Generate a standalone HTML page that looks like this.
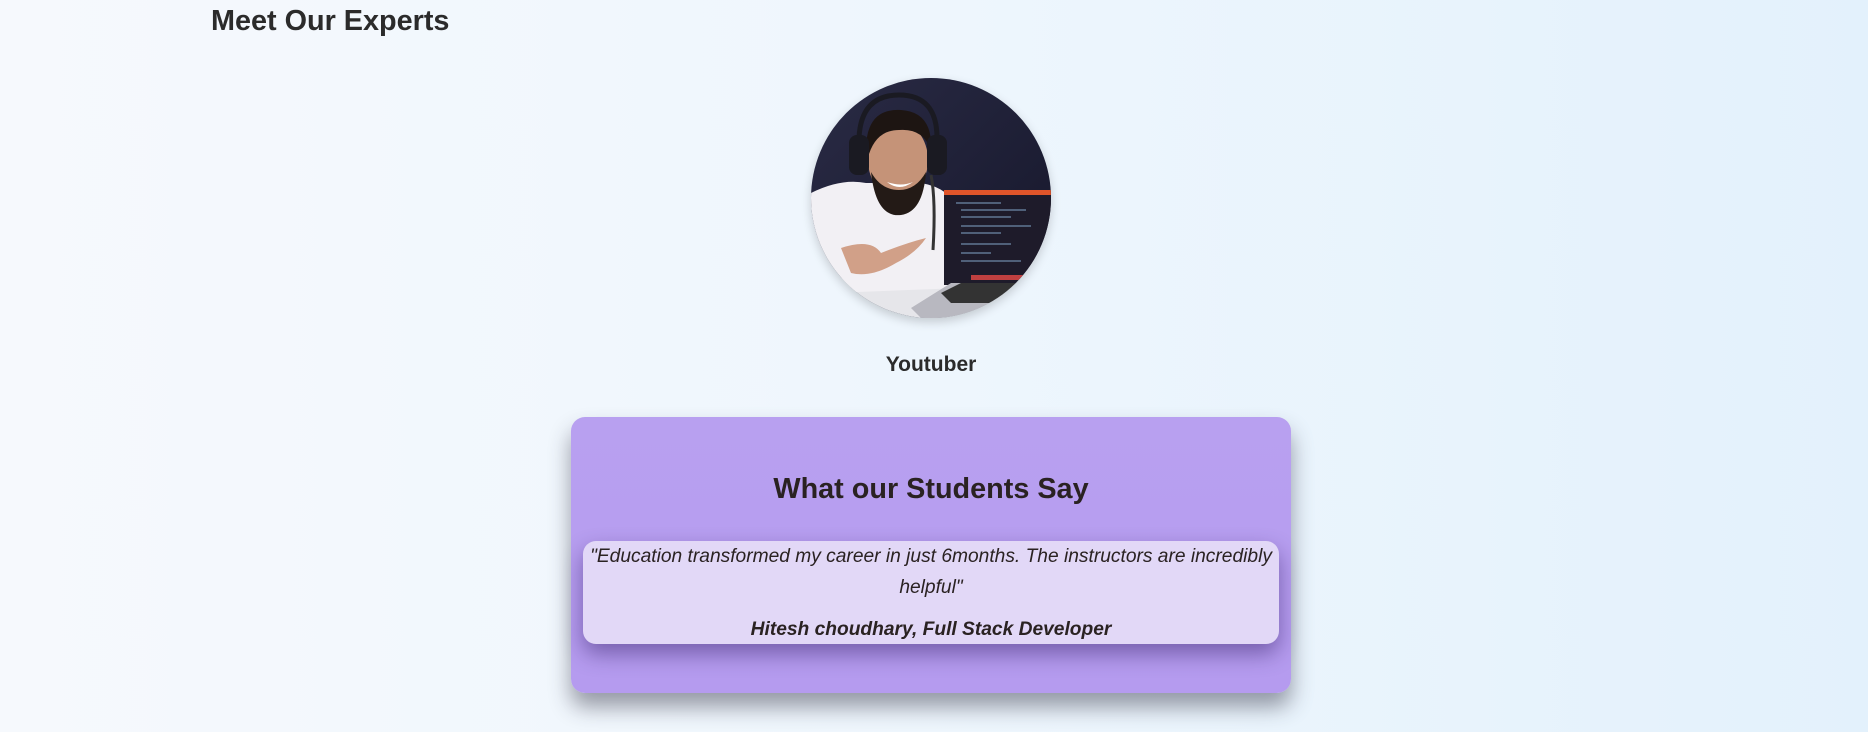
<!DOCTYPE html>
<html><head><meta charset="utf-8"><style>
html,body{margin:0;padding:0;width:1868px;height:732px;overflow:hidden}
body{background:linear-gradient(90deg,#f6f9fd 0%,#eef6fd 50%,#e3f1fc 100%);font-family:"Liberation Sans",Arial,sans-serif;color:#2b2b2b;position:relative}
.h1{position:absolute;left:211px;top:3px;font-size:28.8px;font-weight:bold;margin:0;line-height:36px}
.av{position:absolute;left:811px;top:78px;width:240px;height:240px;border-radius:50%;overflow:hidden;box-shadow:0 4px 10px rgba(0,0,0,.18)}
.yt{position:absolute;left:0;width:1862px;text-align:center;top:352px;font-size:21px;font-weight:bold;line-height:26px}
.card{position:absolute;left:571px;top:417px;width:720px;height:276px;border-radius:14px;background:linear-gradient(#b8a0f0,#b59bef);box-shadow:0 14px 22px rgba(40,40,60,.45)}
.ch{position:absolute;left:571px;width:720px;top:472px;margin:0;text-align:center;font-size:28.8px;font-weight:bold;line-height:34px;color:#2a2222}
.inner{position:absolute;left:583px;top:541px;width:696px;height:103px;border-radius:13px;background:#e2d8f7;box-shadow:0 10px 22px rgba(40,20,90,.45);text-align:center;font-size:19.2px;font-style:italic;color:#2a2222}
.q{position:absolute;left:0;right:0;top:0;line-height:31px}
.a{position:absolute;left:0;right:0;top:77px;font-weight:bold;line-height:24px}
</style></head><body>
<div class="h1">Meet Our Experts</div>
<div class="av">
<svg width="240" height="240" viewBox="0 0 240 240">
<defs><linearGradient id="bg" x1="0" y1="0" x2="1" y2="1"><stop offset="0" stop-color="#2a2b45"/><stop offset="1" stop-color="#15162a"/></linearGradient></defs>
<rect width="240" height="240" fill="url(#bg)"/>
<rect x="0" y="200" width="240" height="40" fill="#e6e6ea"/>
<path d="M0 115 Q30 100 55 105 L110 105 Q140 110 150 135 L150 210 L20 215 L0 215Z" fill="#f2f0f4"/>
<g transform="translate(0,12)">
<ellipse cx="87" cy="70" rx="30" ry="38" fill="#c59378"/>
<path d="M55 60 Q55 18 90 20 Q122 22 120 60 Q112 38 88 40 Q66 40 58 64Z" fill="#1d1512"/>
<path d="M60 82 Q65 128 90 125 Q112 122 115 82 Q105 100 88 100 Q70 100 60 82Z" fill="#231a16"/>
<path d="M76 92 Q88 102 102 92 Q90 97 76 92Z" fill="#fff"/>
<rect x="38" y="45" width="20" height="40" rx="8" fill="#1a1a22"/>
<rect x="116" y="45" width="20" height="40" rx="8" fill="#1a1a22"/>
<path d="M48 48 Q50 5 88 5 Q126 5 126 48" stroke="#1a1a22" stroke-width="5" fill="none"/>
<path d="M120 85 Q125 110 122 160" stroke="#333" stroke-width="3" fill="none"/>
</g>
<rect x="133" y="112" width="115" height="95" fill="#1e1b2a"/>
<rect x="133" y="112" width="115" height="5" fill="#e0552a"/>
<g stroke="#8fb8e0" stroke-width="1.2" opacity=".7"><line x1="145" y1="125" x2="190" y2="125"/><line x1="150" y1="132" x2="215" y2="132"/><line x1="150" y1="139" x2="200" y2="139"/><line x1="150" y1="148" x2="220" y2="148"/><line x1="150" y1="155" x2="190" y2="155"/><line x1="150" y1="166" x2="200" y2="166"/><line x1="150" y1="175" x2="180" y2="175"/><line x1="150" y1="183" x2="210" y2="183"/></g>
<rect x="160" y="197" width="55" height="5" fill="#c04040"/>
<path d="M100 230 L140 205 L240 205 L240 240 L110 240Z" fill="#b8b8c0"/>
<path d="M130 215 L150 205 L210 205 L205 225 L140 225Z" fill="#333"/>
<path d="M30 170 Q60 160 70 175 Q95 165 115 160 Q105 175 85 185 Q60 200 40 195Z" fill="#d1a088"/>
</svg>
</div>
<div class="yt">Youtuber</div>
<div class="card"></div>
<div class="ch">What our Students Say</div>
<div class="inner">
<div class="q">"Education transformed my career in just 6months. The instructors are incredibly helpful"</div>
<div class="a">Hitesh choudhary, Full Stack Developer</div>
</div>
</body></html>
